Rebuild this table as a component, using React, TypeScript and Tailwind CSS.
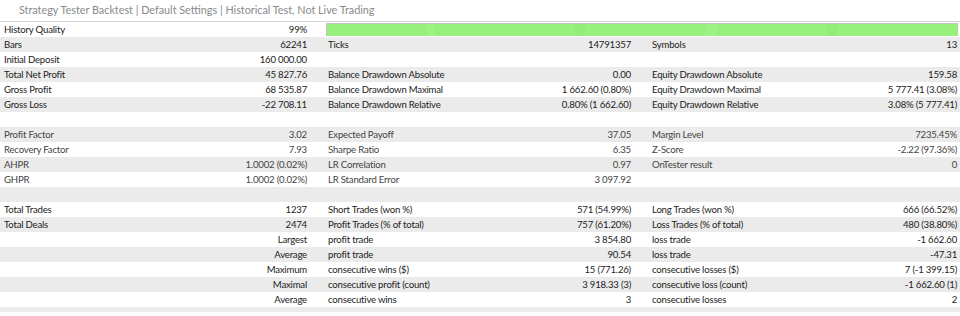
type Row = [string, string, string, string, string, string] | null;

const rows: Row[] = [
  ["Bars", "62241", "Ticks", "14791357", "Symbols", "13"],
  ["Initial Deposit", "160 000.00", "", "", "", ""],
  ["Total Net Profit", "45 827.76", "Balance Drawdown Absolute", "0.00", "Equity Drawdown Absolute", "159.58"],
  ["Gross Profit", "68 535.87", "Balance Drawdown Maximal", "1 662.60 (0.80%)", "Equity Drawdown Maximal", "5 777.41 (3.08%)"],
  ["Gross Loss", "-22 708.11", "Balance Drawdown Relative", "0.80% (1 662.60)", "Equity Drawdown Relative", "3.08% (5 777.41)"],
  null,
  ["Profit Factor", "3.02", "Expected Payoff", "37.05", "Margin Level", "7235.45%"],
  ["Recovery Factor", "7.93", "Sharpe Ratio", "6.35", "Z-Score", "-2.22 (97.36%)"],
  ["AHPR", "1.0002 (0.02%)", "LR Correlation", "0.97", "OnTester result", "0"],
  ["GHPR", "1.0002 (0.02%)", "LR Standard Error", "3 097.92", "", ""],
  null,
  ["Total Trades", "1237", "Short Trades (won %)", "571 (54.99%)", "Long Trades (won %)", "666 (66.52%)"],
  ["Total Deals", "2474", "Profit Trades (% of total)", "757 (61.20%)", "Loss Trades (% of total)", "480 (38.80%)"],
  ["", "Largest", "profit trade", "3 854.80", "loss trade", "-1 662.60"],
  ["", "Average", "profit trade", "90.54", "loss trade", "-47.31"],
  ["", "Maximum", "consecutive wins ($)", "15 (771.26)", "consecutive losses ($)", "7 (-1 399.15)"],
  ["", "Maximal", "consecutive profit (count)", "3 918.33 (3)", "consecutive loss (count)", "-1 662.60 (1)"],
  ["", "Average", "consecutive wins", "3", "consecutive losses", "2"],
];

function Cells({ r }: { r: Row }) {
  if (!r) return null;
  return (
    <>
      <div className="w-[200px] pl-1 truncate">{r[0]}</div>
      <div className="w-[107px] text-right">{r[1]}</div>
      <div className="w-[200px] pl-[21px] truncate">{r[2]}</div>
      <div className="w-[124px] text-right">{r[3]}</div>
      <div className="w-[200px] pl-[21px] truncate">{r[4]}</div>
      <div className="w-[126px] text-right">{r[5]}</div>
    </>
  );
}

export default function App() {
  return (
    <div
      className="w-[960px] h-[316px] bg-white overflow-hidden text-[#222]"
      style={{ fontFamily: 'Lato, "Open Sans", sans-serif' }}
    >
      <div className="h-[21px] pl-[19px] flex items-center text-[10.8px] text-[#8a8a8a]">
        Strategy Tester Backtest | Default Settings | Historical Test, Not Live Trading
      </div>

      <div className="border-t border-[#d4d4d4] text-[9.6px] tracking-[-0.2px] leading-[15px]">
        <div className="flex h-[15px] items-center bg-white">
          <div className="w-[200px] pl-1">History Quality</div>
          <div className="w-[107px] text-right">99%</div>
          <div className="ml-[19px] mr-[2px] flex-1 h-[13px] border-t border-l border-[#c4c4c4] bg-[#98f07c] flex">
            <div className="w-[100px]" />
            <div className="w-[8px] bg-[#9cf283]" />
            <div className="w-[140px]" />
            <div className="w-[10px] bg-[#93ec78]" />
            <div className="w-[120px]" />
            <div className="w-[12px] bg-[#9df285]" />
            <div className="w-[110px]" />
            <div className="w-[10px] bg-[#93ec78]" />
          </div>
        </div>
        {rows.map((r, i) => (
          <div
            key={i}
            className={`flex h-[15px] items-center whitespace-nowrap ${
              i % 2 === 0 ? "bg-[#ebebeb]" : "bg-white"
            } ${i >= 6 && i <= 9 ? "text-[#444]" : ""}`}
          >
            <Cells r={r} />
          </div>
        ))}
        <div className="h-[5px] bg-[#ebebeb]" />
      </div>
    </div>
  );
}
